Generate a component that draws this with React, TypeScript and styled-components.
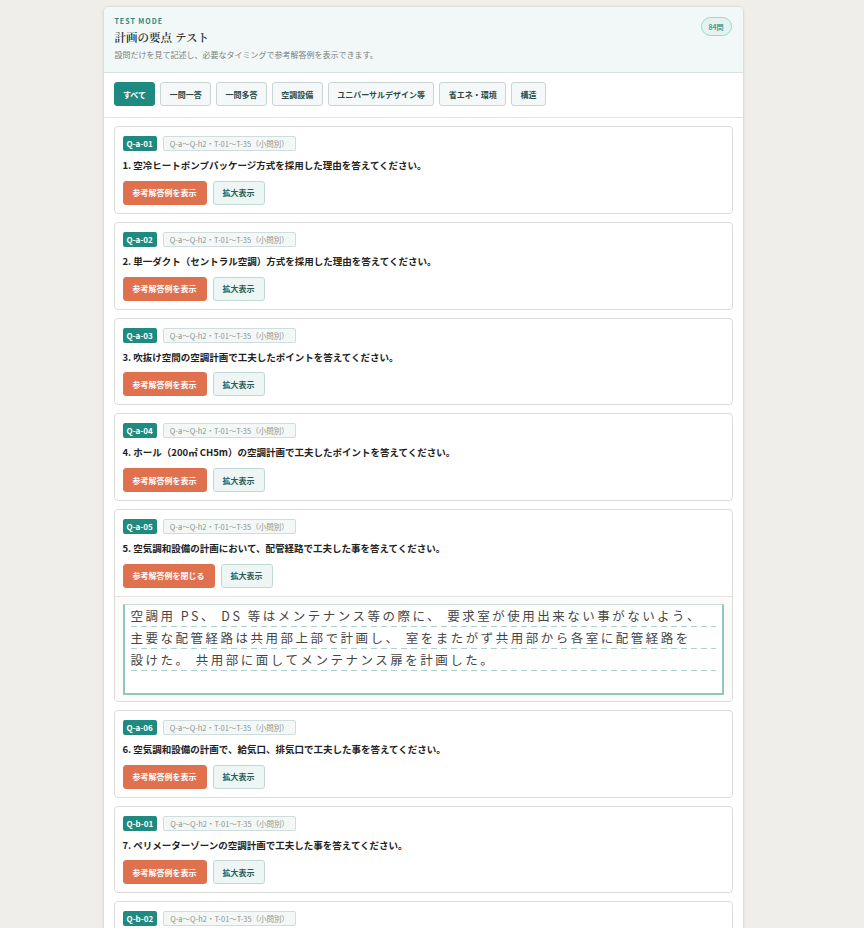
import React, { useState } from 'react'
import styled, { createGlobalStyle } from 'styled-components'

const GlobalStyle = createGlobalStyle`
  html, body {
    margin: 0;
    padding: 0;
    overflow: hidden;
    background: #f0eeea;
  }
  body {
    font-family: 'Noto Sans CJK JP', 'Noto Sans', sans-serif;
    color: #222;
  }
`

const teal = '#1f8a7f'
const orange = '#e0714f'

const Page = styled.div`
  display: flex;
  justify-content: center;
  padding: 6px 18px 0 0;
`

const Panel = styled.div`
  width: 641px;
  background: #fff;
  border: 1px solid #e0ddd8;
  border-radius: 6px;
  box-shadow: 0 1px 4px rgba(0, 0, 0, 0.06);
  overflow: hidden;
  box-sizing: border-box;
`

const Header = styled.header`
  display: flex;
  justify-content: space-between;
  align-items: flex-start;
  background: #f2f8f8;
  border-bottom: 1px solid #d9e2e1;
  padding: 9px 11px 9px 11px;
  height: 66px;
  box-sizing: border-box;
`

const Eyebrow = styled.div`
  font-size: 7px;
  font-weight: 700;
  letter-spacing: 1px;
  color: ${teal};
  line-height: 10px;
`

const Title = styled.h1`
  margin: 3px 0 0;
  font-family: 'Noto Serif CJK JP', 'Liberation Serif', serif;
  font-size: 11.5px;
  font-weight: 600;
  line-height: 16px;
  color: #1d2b2a;
`

const Subtitle = styled.p`
  margin: 4px 0 0;
  font-size: 8px;
  line-height: 11px;
  color: #7a7f7e;
`

const Count = styled.span`
  display: inline-flex;
  align-items: center;
  height: 19px;
  padding: 0 7px;
  margin-top: 1px;
  border: 1px solid #a6d4cc;
  background: #e5f3f0;
  border-radius: 999px;
  font-size: 7px;
  font-weight: 500;
  color: ${teal};
  box-sizing: border-box;
`

const Filters = styled.nav`
  display: flex;
  gap: 5px;
  padding: 9px 10px 11px;
  border-bottom: 1px solid #e3e3e1;
`

const FilterButton = styled.button<{ $active?: boolean }>`
  height: 24px;
  padding: 0 8.4px;
  border-radius: 3px;
  border: 1px solid ${(p) => (p.$active ? teal : '#c9d6d4')};
  background: ${(p) => (p.$active ? teal : '#f4f8f8')};
  color: ${(p) => (p.$active ? '#fff' : '#2d4a47')};
  font-family: inherit;
  font-size: 8px;
  font-weight: 700;
  cursor: pointer;
`

const List = styled.div`
  display: flex;
  flex-direction: column;
  gap: 8px;
  padding: 8px 10px;
`

const Card = styled.article`
  border: 1px solid #dcdcda;
  border-radius: 4px;
  background: #fff;
  overflow: hidden;
`

const CardBody = styled.div`
  padding: 9px 8px 8px;
`

const TagRow = styled.div`
  display: flex;
  gap: 6px;
  margin-bottom: 6px;
`

const Code = styled.span`
  display: inline-flex;
  align-items: center;
  height: 15px;
  padding: 0 4px;
  border-radius: 2px;
  background: ${teal};
  color: #fff;
  font-size: 8px;
  font-weight: 700;
`

const Range = styled.span`
  display: inline-flex;
  align-items: center;
  height: 15px;
  padding: 0 6px;
  border: 1px solid #cfdedc;
  border-radius: 2px;
  background: #f3f8f7;
  color: #8a9493;
  font-size: 7.5px;
  box-sizing: border-box;
`

const Question = styled.p`
  margin: 0 0 7px;
  font-size: 9.5px;
  font-weight: 700;
  line-height: 16.75px;
  color: #222;
`

const Actions = styled.div`
  display: flex;
  gap: 6px;
`

const Button = styled.button<{ $primary?: boolean }>`
  height: 24px;
  padding: 0 9px;
  border-radius: 3px;
  border: 1px solid ${(p) => (p.$primary ? orange : '#c3d7d4')};
  background: ${(p) => (p.$primary ? orange : '#eef6f5')};
  color: ${(p) => (p.$primary ? '#fff' : '#2c5b55')};
  font-family: inherit;
  font-size: 8px;
  font-weight: 700;
  cursor: pointer;
`

const AnswerSection = styled.div`
  border-top: 1px solid #e2e2e0;
  background: #fbfbfa;
  padding: 7px 8px 6px;
`

const AnswerSheet = styled.div`
  background: #fff;
  border: 2px solid #8fc7bd;
  border-top: 1px solid #c8dedb;
  padding: 0 6px;
`

const Line = styled.div<{ $dashed?: boolean }>`
  height: 22px;
  line-height: 22px;
  font-size: 12.5px;
  letter-spacing: 2.5px;
  color: #454545;
  white-space: nowrap;
  background: ${(p) =>
    p.$dashed
      ? 'linear-gradient(to right, #a8d2cb 62%, transparent 0) left bottom / 10px 1px repeat-x'
      : 'none'};
`

type Item = {
  code: string
  text: string
}

const items: Item[] = [
  { code: 'Q-a-01', text: '1. 空冷ヒートポンプパッケージ方式を採用した理由を答えてください。' },
  { code: 'Q-a-02', text: '2. 単一ダクト（セントラル空調）方式を採用した理由を答えてください。' },
  { code: 'Q-a-03', text: '3. 吹抜け空間の空調計画で工夫したポイントを答えてください。' },
  { code: 'Q-a-04', text: '4. ホール（200㎡ CH5m）の空調計画で工夫したポイントを答えてください。' },
  { code: 'Q-a-05', text: '5. 空気調和設備の計画において、配管経路で工夫した事を答えてください。' },
  { code: 'Q-a-06', text: '6. 空気調和設備の計画で、給気口、排気口で工夫した事を答えてください。' },
  { code: 'Q-b-01', text: '7. ペリメーターゾーンの空調計画で工夫した事を答えてください。' },
  { code: 'Q-b-02', text: '8. インテリアゾーンの空調計画で工夫した事を答えてください。' },
]

const answerLines = [
  '空調用 PS、 DS 等はメンテナンス等の際に、 要求室が使用出来ない事がないよう、',
  '主要な配管経路は共用部上部で計画し、 室をまたがず共用部から各室に配管経路を',
  '設けた。 共用部に面してメンテナンス扉を計画した。',
  '',
]

const filters = ['すべて', '一問一答', '一問多答', '空調設備', 'ユニバーサルデザイン等', '省エネ・環境', '構造']

const App: React.FC = () => {
  const [active, setActive] = useState('すべて')
  const [open, setOpen] = useState('Q-a-05')

  return (
    <>
      <GlobalStyle />
      <Page>
        <Panel>
          <Header>
            <div>
              <Eyebrow>TEST MODE</Eyebrow>
              <Title>計画の要点 テスト</Title>
              <Subtitle>設問だけを見て記述し、必要なタイミングで参考解答例を表示できます。</Subtitle>
            </div>
            <Count>84問</Count>
          </Header>
          <Filters>
            {filters.map((f) => (
              <FilterButton key={f} $active={active === f} onClick={() => setActive(f)}>
                {f}
              </FilterButton>
            ))}
          </Filters>
          <List>
            {items.map((item) => {
              const isOpen = open === item.code
              return (
                <Card key={item.code}>
                  <CardBody>
                    <TagRow>
                      <Code>{item.code}</Code>
                      <Range>Q-a〜Q-h2・T-01〜T-35（小問別）</Range>
                    </TagRow>
                    <Question>{item.text}</Question>
                    <Actions>
                      <Button $primary onClick={() => setOpen(isOpen ? '' : item.code)}>
                        {isOpen ? '参考解答例を閉じる' : '参考解答例を表示'}
                      </Button>
                      <Button>拡大表示</Button>
                    </Actions>
                  </CardBody>
                  {isOpen && (
                    <AnswerSection>
                      <AnswerSheet>
                        {answerLines.map((l, i) => (
                          <Line key={i} $dashed={i < answerLines.length - 1}>
                            {l}
                          </Line>
                        ))}
                      </AnswerSheet>
                    </AnswerSection>
                  )}
                </Card>
              )
            })}
          </List>
        </Panel>
      </Page>
    </>
  )
}

export default App
